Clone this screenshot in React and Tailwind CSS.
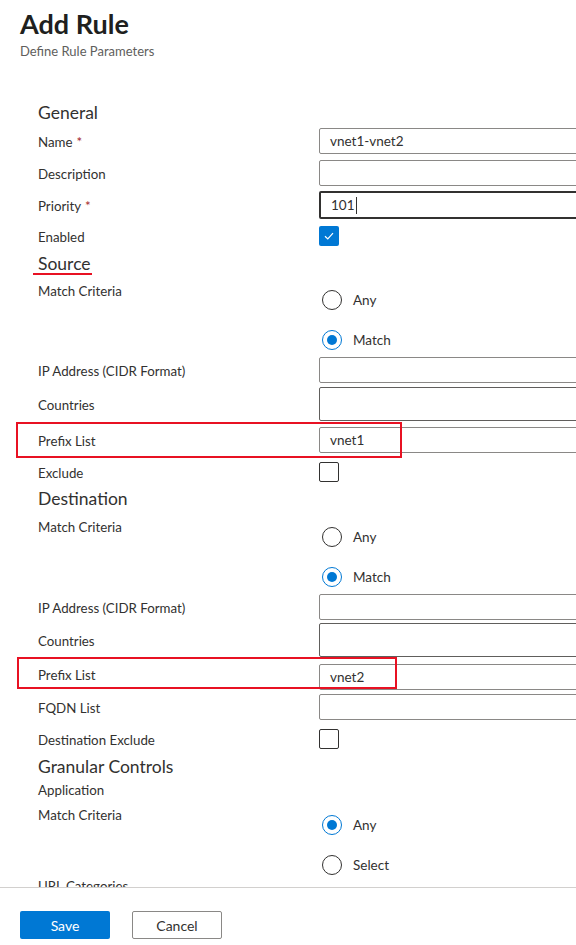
import React from "react"

const font = { fontFamily: "Lato, 'Open Sans', sans-serif" }

const TextInput = ({ value, focused, tall }) => (
    <div
        className={
            "w-[300px] bg-white flex items-center pl-[10px] text-[13.5px] text-[#323130] rounded-[2px] " +
            (focused
                ? "h-[28px] border-2 border-[#323130]"
                : tall
                ? "h-[34px] border border-[#605e5c]"
                : "h-[26px] border border-[#8a8886]")
        }
    >
        {value}
        {focused && <span className="inline-block w-px h-[17px] bg-[#323130] ml-[1px]" />}
    </div>
)

const Check = ({ checked }) =>
    checked ? (
        <div className="w-[20px] h-[20px] rounded-[2px] bg-[#0078d4] flex items-center justify-center">
            <svg width="12" height="12" viewBox="0 0 12 12" fill="none">
                <path d="M2 6.3 L4.8 9 L10 3.2" stroke="white" strokeWidth="1.2" />
            </svg>
        </div>
    ) : (
        <div className="w-[20px] h-[20px] rounded-[2px] border border-[#323130] bg-white" />
    )

const Radio = ({ label, checked }) => (
    <div className="flex items-center h-[20px] gap-[11px]">
        {checked ? (
            <div className="w-[20px] h-[20px] rounded-full border border-[#0078d4] flex items-center justify-center">
                <div className="w-[10px] h-[10px] rounded-full bg-[#0078d4]" />
            </div>
        ) : (
            <div className="w-[20px] h-[20px] rounded-full border border-[#323130]" />
        )}
        <span className="text-[13.5px] text-[#323130] leading-5">{label}</span>
    </div>
)

const Row = ({ label, required, h, children, mark }) => (
    <div className={"relative flex items-center " + h}>
        <div className="w-[281px] shrink-0 pt-[3px] text-[13.3px] text-[#323130]">
            {label}
            {required && <span className="text-[#a4262c] ml-[4px]">*</span>}
        </div>
        <div className="shrink-0">{children}</div>
        {mark}
    </div>
)

const Heading = ({ children, h, underline }) => (
    <div className={"relative flex items-center text-[17.5px] text-[#323130] " + h}>
        {children}
        {underline && (
            <div className="absolute left-[-5px] bottom-[3px] w-[59px] h-[2px] bg-[#e81123]" />
        )}
    </div>
)

const MatchBlock = ({ pt, rpt, options, pb }) => (
    <div className={"flex " + pb}>
        <div className={"w-[281px] shrink-0 text-[13.3px] text-[#323130] leading-5 " + pt}>Match Criteria</div>
        <div className={"flex flex-col gap-[20px] pl-[3px] " + rpt}>
            {options.map((o) => (
                <Radio key={o.label} label={o.label} checked={o.checked} />
            ))}
        </div>
    </div>
)

export default function App() {
    return (
        <div className="w-[576px] h-[945px] bg-white flex flex-col overflow-hidden" style={font}>
            <div className="h-[887px] overflow-hidden">
                <div className="pl-[20px] pt-[6px]">
                    <div className="text-[27px] font-bold text-[#201f1e] leading-[36px]">Add Rule</div>
                    <div className="text-[13px] text-[#605e5c] leading-[18px]">Define Rule Parameters</div>
                </div>
                <div className="pl-[38px] mt-[42px]">
                    <Heading h="h-[23px]">General</Heading>
                    <Row label="Name" required h="h-[32px]">
                        <TextInput value="vnet1-vnet2" />
                    </Row>
                    <Row label="Description" h="h-[32px]">
                        <TextInput value="" />
                    </Row>
                    <Row label="Priority" required h="h-[32px]">
                        <TextInput value="101" focused />
                    </Row>
                    <Row label="Enabled" h="h-[30px]">
                        <Check checked />
                    </Row>
                    <Heading h="h-[27px]" underline>
                        Source
                    </Heading>
                    <MatchBlock
                        pt="pt-[3px]"
                        rpt="pt-[12px]"
                        pb="pb-[4px]"
                        options={[
                            { label: "Any", checked: false },
                            { label: "Match", checked: true },
                        ]}
                    />
                    <Row label="IP Address (CIDR Format)" h="h-[32px]">
                        <TextInput value="" />
                    </Row>
                    <Row label="Countries" h="h-[36px]">
                        <TextInput value="" tall />
                    </Row>
                    <Row
                        label="Prefix List"
                        h="h-[36px]"
                        mark={
                            <div className="absolute left-[-22px] top-0 w-[386px] h-[36px] border-2 border-[#e81123]" />
                        }
                    >
                        <TextInput value="vnet1" />
                    </Row>
                    <Row label="Exclude" h="h-[28px]">
                        <Check />
                    </Row>
                    <Heading h="h-[26px]">Destination</Heading>
                    <MatchBlock
                        pt="pt-[5px]"
                        rpt="pt-[15px]"
                        pb="pb-[4px]"
                        options={[
                            { label: "Any", checked: false },
                            { label: "Match", checked: true },
                        ]}
                    />
                    <Row label="IP Address (CIDR Format)" h="h-[32px]">
                        <TextInput value="" />
                    </Row>
                    <Row label="Countries" h="h-[34px]">
                        <TextInput value="" tall />
                    </Row>
                    <Row
                        label="Prefix List"
                        h="h-[34px]"
                        mark={
                            <div className="absolute left-[-21px] top-0 w-[380px] h-[32px] border-2 border-[#e81123]" />
                        }
                    >
                        <div className="pt-[6px]">
                            <TextInput value="vnet2" />
                        </div>
                    </Row>
                    <Row label="FQDN List" h="h-[32px]">
                        <TextInput value="" />
                    </Row>
                    <Row label="Destination Exclude" h="h-[32px]">
                        <Check />
                    </Row>
                    <Heading h="h-[24px]">Granular Controls</Heading>
                    <div className="h-[22px] flex items-center pt-[2px] text-[13.3px] text-[#323130]">Application</div>
                    <MatchBlock
                        pt="pt-[4px]"
                        rpt="pt-[14px]"
                        pb="pb-[1px]"
                        options={[
                            { label: "Any", checked: true },
                            { label: "Select", checked: false },
                        ]}
                    />
                    <div className="text-[13.3px] text-[#323130] leading-5">URL Categories</div>
                </div>
            </div>
            <div className="flex-1 border-t border-[#d2d0ce] flex items-start pt-[23px] pl-[20px] gap-[22px]">
                <button className="w-[90px] h-[28px] bg-[#0078d4] text-white text-[14px] rounded-[2px]">Save</button>
                <button className="w-[90px] h-[28px] bg-white border border-[#8a8886] text-[#323130] text-[14px] rounded-[2px]">
                    Cancel
                </button>
            </div>
        </div>
    )
}
